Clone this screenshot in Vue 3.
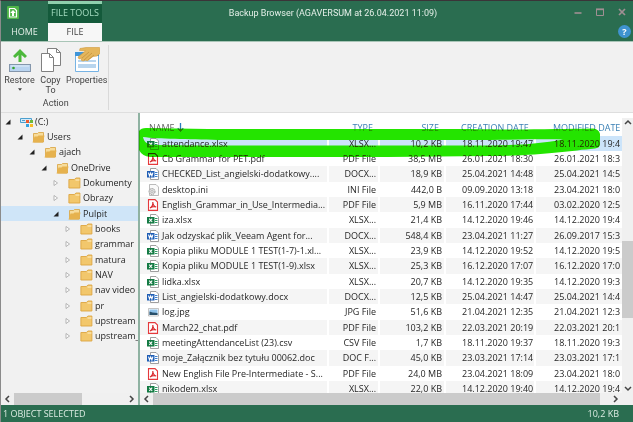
<script setup>
import { ref } from 'vue'

const tree = [
  { name: '(C:)', level: 0, open: true, icon: 'drive' },
  { name: 'Users', level: 1, open: true },
  { name: 'ajach', level: 2, open: true },
  { name: 'OneDrive', level: 3, open: true },
  { name: 'Dokumenty', level: 4 },
  { name: 'Obrazy', level: 4 },
  { name: 'Pulpit', level: 4, open: true },
  { name: 'books', level: 5 },
  { name: 'grammar', level: 5 },
  { name: 'matura', level: 5 },
  { name: 'NAV', level: 5 },
  { name: 'nav video', level: 5 },
  { name: 'pr', level: 5 },
  { name: 'upstream l', level: 5 },
  { name: 'upstream_', level: 5 },
]
const folder = ref('Pulpit')

const files = [
  ['xls', 'attendance.xlsx', 'XLSX...', '10,2 KB', '18.11.2020 19:47', '18.11.2020 19:4'],
  ['pdf', 'Cb Grammar for PET.pdf', 'PDF File', '38,5 MB', '26.01.2021 18:30', '26.01.2021 18:3'],
  ['doc', 'CHECKED_List_angielski-dodatkowy....', 'DOCX...', '18,9 KB', '25.04.2021 14:48', '25.04.2021 14:5'],
  ['ini', 'desktop.ini', 'INI File', '442,0 B', '09.09.2020 13:18', '23.04.2021 18:0'],
  ['pdf', 'English_Grammar_in_Use_Intermedia...', 'PDF File', '5,9 MB', '16.11.2020 17:44', '03.02.2020 12:5'],
  ['xls', 'iza.xlsx', 'XLSX...', '21,4 KB', '14.12.2020 19:46', '14.12.2020 19:4'],
  ['doc', 'Jak odzyskać plik_Veeam Agent for...', 'DOCX...', '548,4 KB', '23.04.2021 11:27', '26.09.2017 15:3'],
  ['xls', 'Kopia pliku MODULE 1 TEST(1-7)-1.xl...', 'XLSX...', '23,9 KB', '14.12.2020 19:52', '14.12.2020 19:5'],
  ['xls', 'Kopia pliku MODULE 1 TEST(1-9).xlsx', 'XLSX...', '25,3 KB', '16.12.2020 17:07', '16.12.2020 17:0'],
  ['xls', 'lidka.xlsx', 'XLSX...', '20,7 KB', '14.12.2020 19:35', '14.12.2020 19:3'],
  ['doc', 'List_angielski-dodatkowy.docx', 'DOCX...', '12,5 KB', '25.04.2021 14:47', '25.04.2021 14:4'],
  ['jpg', 'log.jpg', 'JPG File', '51,6 KB', '21.04.2021 12:35', '21.04.2021 12:3'],
  ['pdf', 'March22_chat.pdf', 'PDF File', '103,2 KB', '22.03.2021 20:19', '22.03.2021 20:1'],
  ['csv', 'meetingAttendanceList (23).csv', 'CSV File', '1,7 KB', '18.11.2020 19:37', '18.11.2020 19:3'],
  ['doc', 'moje_Załącznik bez tytułu 00062.doc', 'DOC F...', '45,0 KB', '23.03.2021 17:14', '23.03.2021 17:1'],
  ['pdf', 'New English File Pre-Intermediate - S...', 'PDF File', '24,0 MB', '23.04.2021 18:09', '23.04.2021 18:0'],
  ['xls', 'nikodem.xlsx', 'XLSX...', '22,0 KB', '14.12.2020 19:40', '14.12.2020 19:4'],
]
const selected = ref(0)
</script>

<template>
  <div class="window">
    <header class="titlebar">
      <div class="left">
        <div class="appcell">
          <svg class="logo" viewBox="0 0 12 13"><rect width="12" height="13" rx="1" fill="#4fb548" /><path d="M2.500 2.500h5l2 2v6.500h-7z" fill="none" stroke="#fff" stroke-width="1.2" /><path d="M6 4l2.800 3H7v3H5V7H3.200z" fill="#fff" /></svg>
        </div>
        <div class="tools">FILE TOOLS</div>
        <button class="tab">HOME</button>
        <button class="tab active">FILE</button>
      </div>
      <h1 class="title">Backup Browser (AGAVERSUM at 26.04.2021 11:09)</h1>
      <div class="right">
        <div class="controls">
          <button aria-label="Minimize"><svg viewBox="0 0 8 8"><path d="M.5 5h7" stroke="#a08f93" stroke-width="1.600" /></svg></button>
          <button aria-label="Maximize"><svg viewBox="0 0 8 8"><path d="M.5 1.500h7M.5 1v6.500h7V1" fill="none" stroke="#a08f93" /><path d="M0 1.300h8" stroke="#a08f93" stroke-width="1.800" /></svg></button>
          <button aria-label="Close"><svg viewBox="0 0 8 8"><path d="M1 1l6 6M7 1L1 7" stroke="#a08f93" stroke-width="1.700" /></svg></button>
        </div>
        <button class="help" aria-label="Help">?</button>
      </div>
    </header>

    <section class="ribbon">
      <div class="group">
        <div class="actions">
          <button class="action">
            <svg viewBox="0 0 26 26"><path d="M13 2l7 7-2 2L14.500 8v7h-3V8L8 11 6 9z" fill="#4cb83c" /><rect x="2.500" y="17.500" width="21" height="7" fill="#b9d4f0" stroke="#8496ab" /><path d="M4 19h18" stroke="#dfecf8" /><circle cx="6.500" cy="21" r="1.300" fill="#33a32c" /></svg>
            <span>Restore</span>
            <svg class="caret" viewBox="0 0 5 3"><path d="M0 0h5L2.500 3z" fill="#444" /></svg>
          </button>
          <button class="action">
            <svg viewBox="0 0 26 26"><g fill="#fff" stroke="#808080"><path d="M9.500 1.500h9l4 4v13h-13z" /><path d="M18.500 1.500v4h4" fill="none" /><path d="M3.500 6.500h8l4 4v14h-12z" /><path d="M11.500 6.500v4h4" fill="none" /></g></svg>
            <span>Copy<br>To</span>
          </button>
          <button class="action">
            <svg viewBox="0 0 26 26"><path d="M1.500 5.500h23v19h-23z" fill="#fff" stroke="#76b3e4" /><path d="M1 5h24v4H1z" fill="#3f95d9" /><path d="M4 13h18v2H4zM4 17h18v4H4z" fill="#b8d5ee" /><path d="M25.500 .5H12L6 1.500l-.5 2 6 .5-7.500 6 1 2 3-1-1 2 2 1 3-1 1 1 6-4.500 4-.5 3.500-3z" fill="#e5b65c" stroke="#d09b3c" stroke-width=".6" /><path d="M15 5l-7 6M18 6l-8 7M20 8l-6 5" stroke="#ba8730" stroke-width=".6" /></svg>
            <span>Properties</span>
          </button>
        </div>
        <div class="caption">Action</div>
      </div>
    </section>

    <main class="body">
      <nav class="side">
        <ul class="tree">
          <li v-for="n in tree" :key="n.name" :class="['l' + n.level, { current: n.name === folder }]" @click="folder = n.name">
            <svg class="twisty" viewBox="0 0 6 6"><path v-if="n.open" d="M5.500 .5v5h-5z" fill="#222" /><path v-else d="M1 .5L4.500 3 1 5.500z" fill="#fff" stroke="#999" stroke-width=".7" /></svg>
            <svg v-if="n.icon" class="nodeicon" viewBox="0 0 13 12"><path d="M.5 2.500h11v4H.5z" fill="#d6eaf8" stroke="#4b9fce" /><path d="M2 4.500h3" stroke="#4b9fce" /><path d="M6 4h3v3H6z" fill="#ee5a2e" /><path d="M10 4h3v3h-3z" fill="#6cb83a" /><path d="M6 8h3v3H6z" fill="#32a2e2" /><path d="M10 8h3v3h-3z" fill="#f7bd25" /></svg>
            <svg v-else-if="n.open" class="nodeicon" viewBox="0 0 13 12"><path d="M1.500 11V2.500h4l1-1h5V11z" fill="#f7dc9b" stroke="#d8a23d" stroke-width=".8" /><path d="M.5 11.500l2-6h3l1-1h6l-1.500 7z" fill="#e6b24e" /></svg>
            <svg v-else class="nodeicon" viewBox="0 0 13 12"><path d="M.9 11V2.500h5.500l1.500-1.500h4V11z" fill="#f2c76c" stroke="#dca542" stroke-width=".9" /><path d="M7.500 3h4" stroke="#fff0c8" /></svg>
            <span>{{ n.name }}</span>
          </li>
        </ul>
        <div class="hbar sidebar">
          <svg viewBox="0 0 6 8"><path d="M5 1L2 4l3 3" /></svg>
          <div class="track"><div class="thumb"></div></div>
          <svg viewBox="0 0 6 8"><path d="M1 1l3 3-3 3" /></svg>
        </div>
      </nav>

      <section class="list">
        <div class="pane">
          <div class="viewport">
            <table>
              <colgroup><col class="cname"><col class="ctype"><col class="csize"><col class="cdate"><col></colgroup>
              <thead>
                <tr>
                  <th class="sorted">NAME<svg viewBox="0 0 7 9"><path d="M3.500 0v8M.7 5.300l2.800 2.900 2.800-2.900" /></svg></th>
                  <th class="num">TYPE</th><th class="num">SIZE</th><th>CREATION DATE</th><th class="mod">MODIFIED DATE</th>
                </tr>
              </thead>
              <tbody>
                <tr v-for="(f, i) in files" :key="f[1]" :class="{ picked: i === selected }" @click="selected = i">
                  <td>
                    <div class="file">
                      <svg viewBox="0 0 12 12">
                        <g v-if="f[0] === 'pdf'"><path d="M1.500 .6h6.500l2.500 2.500v8.300h-9z" fill="#fff" stroke="#e5393c" stroke-width="1.100" /><path d="M3 9c2-1 3-4 2.800-6C6 6 7 7.500 9.200 8 7 7.300 5 7.600 3 9z" fill="none" stroke="#d9282c" stroke-width="1.100" /></g>
                        <g v-else-if="f[0] === 'ini'"><path d="M2.500 .5H9l2.500 2.500v8.500h-9z" fill="#fafafa" stroke="#aaa" stroke-width=".8" /><circle cx="5" cy="7.500" r="3" fill="#ddd" stroke="#999" stroke-dasharray="1.500 .7" /><circle cx="5" cy="7.500" r="1" fill="#fff" stroke="#999" stroke-width=".6" /></g>
                        <g v-else-if="f[0] === 'jpg'"><path d="M1.500 2.500h10v7.500h-10z" fill="#fff" stroke="#aaa" stroke-width=".7" /><path d="M2.500 3.500h8v5.500h-8z" fill="#8fc2ea" /><path d="M2.500 9V5.500l3 1 5 .5v2z" fill="#284f69" /></g>
                        <g v-else><path d="M3.500 .5H9l2.500 2.500v8.500h-8z" fill="#fff" stroke="#888" stroke-width=".8" /><path d="M8 4.500h2.500M8 6.500h2.500M8 8.500h2.500" :class="f[0]" class="rule" /><rect y="3" width="7.500" height="6.500" :class="f[0]" class="badge" /><path v-if="f[0] === 'doc'" d="M1.500 4.700l1 3.200L3.700 5l1.200 2.900 1-3.200" class="mark" /><path v-else d="M2.200 4.600l3 3.400M5.200 4.600l-3 3.400" class="mark" /></g>
                      </svg>
                      <span>{{ f[1] }}</span>
                    </div>
                  </td>
                  <td class="num">{{ f[2] }}</td><td class="num">{{ f[3] }}</td><td>{{ f[4] }}</td><td class="mod">{{ f[5] }}</td>
                </tr>
              </tbody>
            </table>
          </div>
          <div class="vbar">
            <svg viewBox="0 0 8 6"><path d="M1 5l3-3 3 3" /></svg>
            <div class="track"><div class="thumb"></div></div>
            <svg viewBox="0 0 8 6"><path d="M1 1l3 3 3-3" /></svg>
          </div>
        </div>
        <div class="hbar">
          <svg viewBox="0 0 6 8"><path d="M5 1L2 4l3 3" /></svg>
          <div class="track"><div class="thumb"></div></div>
          <svg viewBox="0 0 6 8"><path d="M1 1l3 3-3 3" /></svg>
        </div>
        <svg class="marker" viewBox="0 0 464 34">
          <path fill-rule="evenodd" d="M1 4Q3 1 8 1L70 2 140 2H330C380 3 420 2 455 1.500Q461 2 462 7V18Q461 21 457 21.500C430 24 400 29 350 29L250 30H80L12 30Q4 29 1 23zM5 10C6 15 9 17 14 18L60 18.500H330C370 18.500 395 18 425 12.500C400 12 370 13 330 13H80C50 12 20 12 5 10z" />
        </svg>
      </section>
    </main>

    <footer class="status"><span>1 OBJECT SELECTED</span><span>10,2 KB</span></footer>
  </div>
</template>

<style>
body { margin: 0; }
</style>

<style scoped>
.window { height: 100vh; box-sizing: border-box; display: flex; flex-direction: column; overflow: hidden; border-top: 1px solid #3a3438; border-left: 1px solid #8b8b8b; background: #f1f1f1; color: #262626; font: 9px/12px "Open Sans", "Noto Sans", sans-serif; }
button { border: 0; padding: 0; background: none; color: inherit; font: inherit; }
.titlebar { display: grid; grid-template-columns: 102px 1fr 70px; height: 40px; background: #2a6d50; color: #e4efe8; border-bottom: 1px solid #a9c5b7; }
.left { display: grid; grid-template-columns: 47px 54px; grid-template-rows: 22px 18px; }
.appcell { padding: 5px 0 0 6px; }
.logo { display: block; width: 12px; height: 13px; }
.tools { box-sizing: border-box; border-top: 3px solid #8ed0ad; background: #145a3b; color: #a5dcc0; text-align: center; line-height: 18px; white-space: nowrap; }
.tab { line-height: 18px; }
.tab.active { background: #f7f7f7; color: #444; }
.title { margin: 0; font: 400 9px/24px Roboto, sans-serif; text-align: center; white-space: nowrap; }
.right { display: flex; flex-direction: column; justify-content: space-between; align-items: flex-end; padding: 6px 2px 3px 0; }
.controls { display: flex; gap: 14px; padding-right: 5px; }
.controls button, .controls svg { display: block; width: 8px; height: 10px; }
.help { width: 13px; height: 13px; border-radius: 50%; background: #3f93d0; color: #fff; font-weight: 700; line-height: 13px; text-align: center; }
.ribbon { display: flex; height: 71px; padding: 3px 0 2px; box-sizing: border-box; border-bottom: 1px solid #dedede; font-family: Roboto, sans-serif; }
.group { display: flex; flex-direction: column; padding: 2px 1px 0 3px; border-right: 1px solid #d9d9d9; }
.actions { display: flex; height: 53px; }
.action { display: flex; flex-direction: column; align-items: center; justify-content: flex-start; min-width: 31px; line-height: 10px; color: #444; }
.action svg { width: 26px; height: 26px; margin-bottom: 2px; }
.action .caret { width: 4px; height: 3px; margin-top: 3px; }
.caption { text-align: center; color: #444; line-height: 14px; }
.body { flex: 1; min-height: 0; display: flex; }
.side { width: 137px; display: flex; flex-direction: column; border-right: 2px solid #8fb2a2; }
.tree { flex: 1; overflow: hidden; margin: 0; padding: 1px 0 0; list-style: none; }
.tree li { display: flex; align-items: center; gap: 2px; height: 15px; white-space: nowrap; }
.tree li:nth-child(3n) { height: 16px; }
.tree .current { background: #cfe5f8; }
.twisty { flex: none; width: 6px; height: 6px; margin-right: 7px; }
.nodeicon { flex: none; width: 13px; height: 12px; }
.l0 { padding-left: 4px; }
.l1 { padding-left: 16px; }
.l2 { padding-left: 28px; }
.l3 { padding-left: 40px; }
.l4 { padding-left: 52px; }
.l5 { padding-left: 64px; }
.hbar { display: flex; align-items: center; gap: 4px; height: 12px; padding: 0 3px; background: #f0f0f0; }
.hbar svg { width: 6px; height: 8px; }
.hbar svg, .vbar svg { flex: none; fill: none; stroke: #444; stroke-width: 1.5; }
.track { flex: 1; align-self: stretch; }
.track .thumb { height: 100%; width: 98%; background: #cbcbcb; }
.sidebar .thumb { width: 61%; }
.list { flex: 1; min-width: 0; position: relative; display: flex; flex-direction: column; background: #fff; }
.list .hbar { padding-right: 14px; }
.pane { flex: 1; min-height: 0; display: flex; }
.viewport { flex: 1; min-width: 0; overflow: hidden; }
table { width: 100%; table-layout: fixed; border-collapse: collapse; }
.cname { width: 188px; }
.ctype { width: 51px; }
.csize { width: 66px; }
.cdate { width: 90px; }
th { height: 23px; padding: 7px 6px 0 16px; box-sizing: border-box; color: #3b80b5; font-weight: 400; text-align: left; white-space: nowrap; }
th.sorted { padding-left: 9px; color: #666; }
th svg { width: 7px; height: 9px; margin-left: 2px; fill: none; stroke: #2b7cc0; stroke-width: 1.3; vertical-align: -1px; }
td { height: 15px; padding: 0 0 0 16px; border-right: 2px solid #fff; white-space: nowrap; overflow: hidden; }
td:first-child { padding-left: 7px; }
td:last-child { border-right: 0; }
tr:nth-child(3n) td { height: 16px; }
th.num, td.num { padding: 0 2px 0 0; text-align: right; }
th.num { padding: 7px 6px 0 0; }
th.mod, td.mod { padding-left: 18px; padding-right: 0; }
tbody tr:nth-child(odd) { background: #f5f5f5; }
tbody tr.picked { background: #cce4fa; }
.file { display: flex; align-items: center; gap: 3px; }
.file svg { flex: none; width: 12px; height: 12px; }
.rule { stroke: #2b9b61; stroke-width: 1; }
.rule.doc { stroke: #3d80cf; }
.badge { fill: #137a43; }
.badge.doc { fill: #1f5eb5; }
.mark { fill: none; stroke: #fff; stroke-width: 1.1; }
.vbar { display: flex; flex-direction: column; align-items: center; width: 11px; margin-top: 5px; padding: 1px 0; background: #f0f0f0; gap: 3px; }
.vbar svg { width: 8px; height: 6px; }
.vbar .track { display: flex; flex-direction: column; justify-content: flex-end; padding-bottom: 65px; }
.vbar .thumb { width: 11px; height: 77px; }
.marker { position: absolute; left: -2px; top: 14px; width: 464px; height: 34px; fill: #24e400; mix-blend-mode: darken; pointer-events: none; }
.status { display: flex; justify-content: space-between; height: 17px; padding: 0 14px 0 2px; background: #2a6d50; color: #dcebe2; line-height: 18px; }
</style>
